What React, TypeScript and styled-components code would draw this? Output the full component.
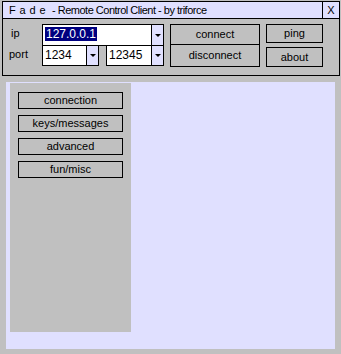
import React from "react";
import styled, { createGlobalStyle } from "styled-components";

const GRAY = "#c0c0c0";
const LAV = "#e0e0ff";

const Global = createGlobalStyle`
  html, body { margin: 0; padding: 0; background: ${GRAY}; }
  body { font-family: "Liberation Sans", Arial, sans-serif; font-size: 11px; color: #000; }
  * { box-sizing: border-box; }
`;

const Page = styled.div`
  width: 341px;
  height: 354px;
  background: ${GRAY};
  padding: 1px 1px 0 2px;
  display: flex;
  flex-direction: column;
`;

const TopPanel = styled.div`
  width: 338px;
  border: 1px solid #000;
  display: flex;
  flex-direction: column;
`;

const TitleBar = styled.div`
  height: 17px;
  background: ${LAV};
  border-bottom: 1px solid #000;
  display: flex;
  align-items: stretch;
`;

const Title = styled.div`
  flex: 1;
  padding-left: 6px;
  line-height: 16px;
  white-space: pre;
  letter-spacing: -0.5px;
`;

const AppName = styled.span`
  letter-spacing: 0.4px;
`;

const CloseBox = styled.div`
  width: 17px;
  border-left: 1px solid #000;
  display: flex;
  align-items: center;
  justify-content: center;
  line-height: 16px;
`;

const Controls = styled.div`
  height: 56px;
  display: flex;
  padding-top: 5px;
`;

const Labels = styled.div`
  width: 39px;
  display: flex;
  flex-direction: column;
  padding-left: 6px;
`;

const Label = styled.div<{ $h: number; $indent?: number }>`
  height: ${(p) => p.$h}px;
  line-height: ${(p) => p.$h - 2}px;
  padding-left: ${(p) => p.$indent ?? 0}px;
`;

const Fields = styled.div`
  width: 122px;
  display: flex;
  flex-direction: column;
`;

const PortRow = styled.div`
  display: flex;
  justify-content: space-between;
  margin-top: -1px;
`;

const Combo = styled.div<{ $w: number; $h: number }>`
  width: ${(p) => p.$w}px;
  height: ${(p) => p.$h}px;
  border: 1px solid #000;
  background: #fff;
  display: flex;
`;

const ComboText = styled.div`
  flex: 1;
  padding: 2px 0 0 2px;
  line-height: 14px;
  font-size: 12px;
`;

const Selected = styled.span`
  background: #000080;
  color: #fff;
  padding: 0 1px;
`;

const DropBtn = styled.div`
  width: 12px;
  background: ${LAV};
  border-left: 1px solid #000;
  display: flex;
  align-items: center;
  justify-content: center;
`;

const Caret = styled.div`
  width: 0;
  height: 0;
  border-left: 3px solid transparent;
  border-right: 3px solid transparent;
  border-top: 3px solid #000;
`;

const ConnCol = styled.div`
  margin-left: 6px;
  width: 90px;
  display: flex;
  flex-direction: column;
`;

const FlatButton = styled.div<{ $w: number; $h: number }>`
  width: ${(p) => p.$w}px;
  height: ${(p) => p.$h}px;
  border: 1px solid #000;
  background: ${GRAY};
  display: flex;
  align-items: center;
  justify-content: center;
  padding-bottom: 1px;
`;

const StackedButton = styled(FlatButton)`
  & + & { margin-top: -1px; }
`;

const SideCol = styled.div`
  margin-left: 6px;
  display: flex;
  flex-direction: column;
  gap: 4px;
`;

const Lower = styled.div`
  margin: 6px 0 0 4px;
  width: 329px;
  height: 267px;
  background: ${LAV};
  padding: 1px 0 0 4px;
`;

const NavPane = styled.div`
  width: 121px;
  height: 249px;
  background: ${GRAY};
  padding: 9px 0 0 8px;
  display: flex;
  flex-direction: column;
  gap: 6px;
`;

const NavButton = styled(FlatButton)``;

const DropDown = () => (
  <DropBtn>
    <Caret />
  </DropBtn>
);

export default function App() {
  return (
    <>
      <Global />
      <Page>
        <TopPanel>
          <TitleBar>
            <Title>
              <AppName>F a d e </AppName>
              {" - Remote Control Client - by triforce"}
            </Title>
            <CloseBox>X</CloseBox>
          </TitleBar>
          <Controls>
            <Labels>
              <Label $h={21} $indent={2}>ip</Label>
              <Label $h={20}>port</Label>
            </Labels>
            <Fields>
              <Combo $w={122} $h={22}>
                <ComboText>
                  <Selected>127.0.0.1</Selected>
                </ComboText>
                <DropDown />
              </Combo>
              <PortRow>
                <Combo $w={57} $h={21}>
                  <ComboText>1234</ComboText>
                  <DropDown />
                </Combo>
                <Combo $w={58} $h={21}>
                  <ComboText>12345</ComboText>
                  <DropDown />
                </Combo>
              </PortRow>
            </Fields>
            <ConnCol>
              <StackedButton $w={90} $h={21}>connect</StackedButton>
              <StackedButton $w={90} $h={23}>disconnect</StackedButton>
            </ConnCol>
            <SideCol>
              <FlatButton $w={57} $h={19}>ping</FlatButton>
              <FlatButton $w={57} $h={20}>about</FlatButton>
            </SideCol>
          </Controls>
        </TopPanel>
        <Lower>
          <NavPane>
            <NavButton $w={105} $h={17}>connection</NavButton>
            <NavButton $w={105} $h={17}>keys/messages</NavButton>
            <NavButton $w={105} $h={17}>advanced</NavButton>
            <NavButton $w={105} $h={17}>fun/misc</NavButton>
          </NavPane>
        </Lower>
      </Page>
    </>
  );
}
